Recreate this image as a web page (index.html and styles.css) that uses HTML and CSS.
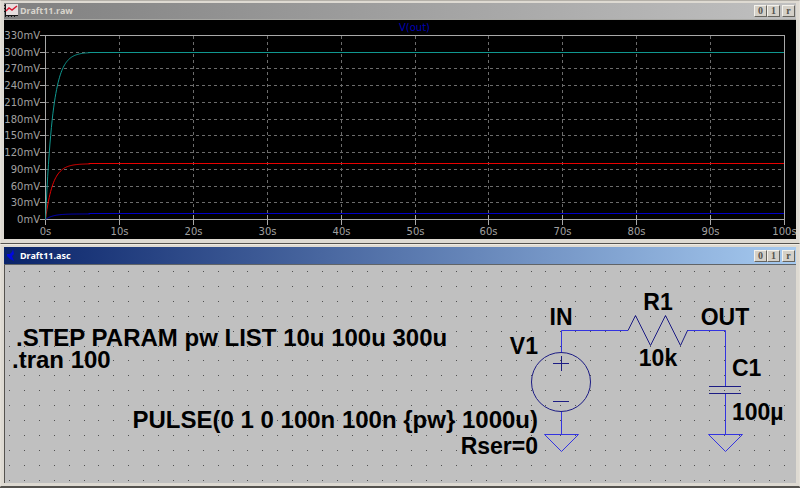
FILE: index.html
```html
<!DOCTYPE html>
<html lang="en">
<head>
<meta charset="utf-8">
<title>Draft11</title>
<link rel="stylesheet" href="styles.css">
</head>
<body>
<main class="desktop">
  <section class="window">
    <header class="titlebar">
      <svg class="icon" viewBox="0 0 14 14" aria-hidden="true">
        <rect x="2" y="0" width="12" height="11" fill="#e6dede"/>
        <path d="M1.500 0v13M0 1.500h2M0 4.500h2M0 7.500h2M1 11.500h13M4.500 11v2M7.500 11v2M10.500 11v2" fill="none" stroke="#151515"/>
        <path d="M2 7L5 4L8 6L13 2" fill="none" stroke="#d81830" stroke-width="1.500"/>
      </svg>
      <h1 class="title">Draft11.raw</h1>
      <button type="button" aria-label="Minimize">0</button>
      <button type="button" aria-label="Maximize">1</button>
      <button type="button" class="close" aria-label="Close">r</button>
    </header>
    <svg class="plot" viewBox="4 20 792 219">
      <path id="grid" class="grid"/>
      <path id="ticks" class="axis"/>
      <rect class="axis" x="45.500" y="35.500" width="739" height="184"/>
      <g id="traces"></g>
      <g id="labels" class="labels"></g>
      <text class="trace-name" x="414.500" y="31">V(out)</text>
    </svg>
  </section>

  <section class="window active">
    <header class="titlebar">
      <svg class="icon" viewBox="0 0 14 14" aria-hidden="true">
        <path d="M3 5L6 5L8 3L9 0L10 5L8 7L10 12L6 10L3 7Z" fill="#0008e0"/>
      </svg>
      <h2 class="title">Draft11.asc</h2>
      <button type="button" aria-label="Minimize">0</button>
      <button type="button" aria-label="Maximize">1</button>
      <button type="button" class="close" aria-label="Close">r</button>
    </header>
    <svg class="schematic" viewBox="5 265 791 218">
      <path id="dots" class="dots"/>
      <g class="wire">
        <path d="M561.500 353V330.500H628M687 330.500H725.500V386M561.500 411V434.500M725.500 394V434.500"/>
        <path d="M544.500 434.500H578.500L561.500 451.500ZM708.500 434.500H742.500L725.500 451.500Z"/>
      </g>
      <g class="part">
        <circle cx="561" cy="382" r="29.500"/>
        <path d="M553 363.500H569M561.500 356V371M553 401.500H569"/>
        <path d="M628 330.500L635.500 315.500L650.500 345.500L665.500 315.500L680.500 345.500L687.500 330.500"/>
        <path d="M709 386.500H741M709 393.500H741"/>
      </g>
      <g class="net">
        <text x="16" y="346" class="directive">.STEP PARAM pw LIST 10u 100u 300u</text>
        <text x="12" y="368" class="directive">.tran 100</text>
        <text x="538" y="428" class="directive end">PULSE(0 1 0 100n 100n {pw} 1000u)</text>
        <text x="538" y="454" class="end">Rser=0</text>
        <text x="538" y="354" class="end">V1</text>
        <text x="561" y="325" class="mid">IN</text>
        <text x="658" y="310" class="mid">R1</text>
        <text x="658" y="366" class="mid">10k</text>
        <text x="725" y="325" class="mid">OUT</text>
        <text x="732" y="376">C1</text>
        <text x="732" y="420">100µ</text>
      </g>
    </svg>
  </section>
</main>
<script src="draw.js"></script>
</body>
</html>
```
FILE: styles.css
```css
* { box-sizing: border-box; }

body {
  margin: 0;
  background: #55534f;
}

.window {
  border: 1px solid #e4e0d8;
  border-top-color: #b4b0a8;
  border-bottom-color: #55534f;
  padding: 2px 3px 4px;
  background: #dedad2;
}

.window.active { padding-bottom: 3px; }

.window + .window { border-top-color: #eeeae2; }

.titlebar {
  display: flex;
  align-items: center;
  height: 17px;
  padding-right: 1px;
  background: linear-gradient(to right, #808080, #c0c0c0);
  border-bottom: 1px solid #a8a8a4;
}

.active .titlebar {
  height: 18px;
  background: linear-gradient(to right, #0a246a, #a6caf0);
  border-bottom-color: #606468;
}

.icon {
  width: 14px;
  height: 14px;
  margin-right: 2px;
}

.title {
  flex: 1;
  margin: 0;
  font: bold 9px/12px "Noto Sans", sans-serif;
  color: #d8d4cc;
}

.active .title { color: #fff; }

.titlebar button {
  width: 13px;
  height: 12px;
  padding: 0;
  border: 1px solid;
  border-color: #f4f2ec #66645e #66645e #f4f2ec;
  background: #d4d0c8;
  color: #55534f;
  font: bold 10px/10px "Liberation Serif", serif;
}

.titlebar .close { margin-left: 2px; }

.plot,
.schematic {
  display: block;
  width: 100%;
}

.plot { background: #000; }

.schematic {
  background: #c0c0c0;
  border-left: 1px solid #55534f;
}

.grid {
  fill: none;
  stroke: #6c6c6c;
  stroke-dasharray: 3 3;
}

.axis {
  fill: none;
  stroke: #a8a8a8;
}

.trace { fill: none; }
.teal { stroke: #109890; }
.red { stroke: #e80000; }
.blue { stroke: #0000c8; }

.labels {
  font: 10px "DejaVu Sans", sans-serif;
  fill: #a0a0a0;
}

.end { text-anchor: end; }
.mid { text-anchor: middle; }

.trace-name {
  font: 10px "DejaVu Sans", sans-serif;
  fill: #0000b4;
  text-anchor: middle;
}

.dots { fill: #505050; }

.wire {
  fill: none;
  stroke: #3434e0;
}

.part {
  fill: none;
  stroke: #1c1c84;
}

.net {
  font: bold 23px "Liberation Sans", sans-serif;
  fill: #000;
}

.directive { font-size: 24px; }
```
FILE: draw.js
```js
const SVG = "http://www.w3.org/2000/svg";
const byId = (id) => document.getElementById(id);

const plot = { left: 45, right: 784, top: 35, bottom: 219, seconds: 100, millivolts: 330 };
const px = (s) => plot.left + (s / plot.seconds) * (plot.right - plot.left);
const py = (mv) => plot.bottom - (mv / plot.millivolts) * (plot.bottom - plot.top);
const crisp = (v) => Math.round(v) + 0.5;

function label(text, x, y, cls) {
  const el = document.createElementNS(SVG, "text");
  el.setAttribute("x", x);
  el.setAttribute("y", y);
  el.setAttribute("class", cls);
  el.textContent = text;
  byId("labels").append(el);
}

function trace(d, cls) {
  const path = document.createElementNS(SVG, "path");
  path.setAttribute("d", d);
  path.setAttribute("class", `trace ${cls}`);
  byId("traces").append(path);
}

let grid = "";
let ticks = "";
for (let s = 0; s <= 100; s += 10) {
  const x = crisp(px(s));
  if (s > 0 && s < 100) grid += `M${x} 36V219`;
  ticks += `M${x} 215V225`;
  label(`${s}s`, x, 235, "mid");
}
for (let mv = 0; mv <= 330; mv += 30) {
  const y = crisp(py(mv));
  if (mv > 0 && mv < 330) grid += `M46 ${y}H784`;
  ticks += `M40 ${y}H46`;
  label(`${mv}mV`, 40, Math.round(y + 3), "end");
}
byId("grid").setAttribute("d", grid);
byId("ticks").setAttribute("d", ticks);

// RC charging curves, time constant 10k * 100u = 1 s
const traces = [[10, "blue"], [100, "red"], [300, "teal"]];
for (const [mv, cls] of traces) {
  let d = "";
  for (let t = 0; t < 6; t += 0.1) {
    d += `${d ? "L" : "M"}${px(t) + 0.5} ${py(mv * (1 - Math.exp(-t))) + 0.5}`;
  }
  trace(d, cls);
  trace(`M${px(5.9)} ${crisp(py(mv))}H784`, cls);
}

// Placement grid of the schematic
const pitch = 14.9;
let dots = "";
for (let row = 0; row < 15; row++) {
  for (let col = 0; col < 53; col++) {
    dots += `M${Math.round(9 + col * pitch)} ${Math.round(271 + row * pitch)}h1v1h-1z`;
  }
}
byId("dots").setAttribute("d", dots);
```
